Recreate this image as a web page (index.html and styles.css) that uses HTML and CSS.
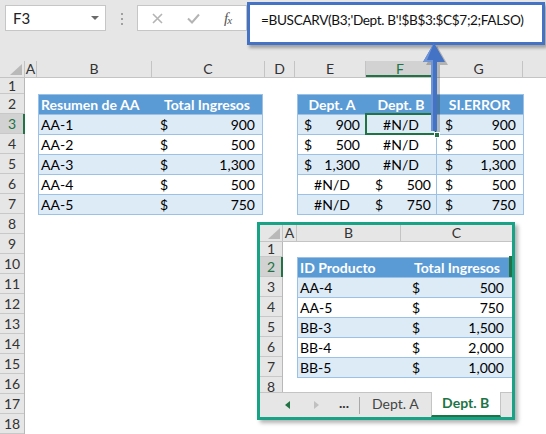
FILE: index.html
```html
<!DOCTYPE html>
<html>
<head>
<meta charset="utf-8">
<link rel="stylesheet" href="styles.css">
</head>
<body>
<div class="app">
  <div class="toolbar">
    <div class="namebox"><span>F3</span><span class="dd"></span></div>
    <div class="grip"><i></i><i></i><i></i></div>
    <div class="fxbox">
      <svg class="ico-x" width="11" height="11" viewBox="0 0 11 11"><path d="M1 1L10 10M10 1L1 10" stroke="#b4b4b4" stroke-width="1.6" fill="none"/></svg>
      <svg class="ico-ok" width="13" height="11" viewBox="0 0 13 11"><path d="M1 5.5L5 9.5L12 1.5" stroke="#b4b4b4" stroke-width="2" fill="none"/></svg>
      <span class="fx">f<sub>x</sub></span>
    </div>
    <div class="formula">=BUSCARV(B3;'Dept. B'!$B$3:$C$7;2;FALSO)</div>
  </div>

  <div class="colheads">
    <div class="corner"><span class="tri"></span></div>
    <div class="ch w-a">A</div>
    <div class="ch w-b">B</div>
    <div class="ch w-c">C</div>
    <div class="ch w-d">D</div>
    <div class="ch w-e">E</div>
    <div class="ch w-f sel">F</div>
    <div class="ch w-g">G</div>
    <div class="ch w-h"></div>
  </div>

  <div class="body">
    <div class="rowheads">
      <div class="rh r1">1</div>
      <div class="rh">2</div>
      <div class="rh sel">3</div>
      <div class="rh">4</div>
      <div class="rh">5</div>
      <div class="rh">6</div>
      <div class="rh">7</div>
      <div class="rh">8</div>
      <div class="rh">9</div>
      <div class="rh">10</div>
      <div class="rh">11</div>
      <div class="rh">12</div>
      <div class="rh">13</div>
      <div class="rh">14</div>
      <div class="rh">15</div>
      <div class="rh">16</div>
      <div class="rh">17</div>
      <div class="rh">18</div>
    </div>
    <div class="cells">
      <div class="tbl tl">
        <div class="tr hd"><div class="c pl">Resumen de AA</div><div class="c ctr">Total Ingresos</div></div>
        <div class="tr band"><div class="c pl">AA-1</div><div class="c acc accl"><span>$</span><span>900</span></div></div>
        <div class="tr"><div class="c pl">AA-2</div><div class="c acc accl"><span>$</span><span>500</span></div></div>
        <div class="tr band"><div class="c pl">AA-3</div><div class="c acc accl"><span>$</span><span>1,300</span></div></div>
        <div class="tr"><div class="c pl">AA-4</div><div class="c acc accl"><span>$</span><span>500</span></div></div>
        <div class="tr band"><div class="c pl">AA-5</div><div class="c acc accl"><span>$</span><span>750</span></div></div>
      </div>
      <div class="tbl trt">
        <div class="tr hd"><div class="c ctr">Dept. A</div><div class="c ctr">Dept. B</div><div class="c ctr">SI.ERROR</div></div>
        <div class="tr band"><div class="c acc acce"><span>$</span><span>900</span></div><div class="c ctr cur">#N/D<span class="handle"></span></div><div class="c acc accg sep"><span>$</span><span>900</span></div></div>
        <div class="tr"><div class="c acc acce"><span>$</span><span>500</span></div><div class="c ctr">#N/D</div><div class="c acc accg sep"><span>$</span><span>500</span></div></div>
        <div class="tr band"><div class="c acc acce"><span>$</span><span>1,300</span></div><div class="c ctr">#N/D</div><div class="c acc accg sep"><span>$</span><span>1,300</span></div></div>
        <div class="tr"><div class="c ctr">#N/D</div><div class="c acc accf"><span>$</span><span>500</span></div><div class="c acc accg sep"><span>$</span><span>500</span></div></div>
        <div class="tr band"><div class="c ctr">#N/D</div><div class="c acc accf"><span>$</span><span>750</span></div><div class="c acc accg sep"><span>$</span><span>750</span></div></div>
      </div>
    </div>
  </div>

  <div class="inset">
    <div class="icolheads">
      <div class="icorner"><span class="tri"></span></div>
      <div class="ch iw-a">A</div>
      <div class="ch iw-b">B</div>
      <div class="ch iw-c">C</div>
    </div>
    <div class="ibody">
      <div class="irowheads">
        <div class="rh ir1">1</div>
        <div class="rh sel">2</div>
        <div class="rh">3</div>
        <div class="rh">4</div>
        <div class="rh">5</div>
        <div class="rh">6</div>
        <div class="rh">7</div>
        <div class="rh ir8">8</div>
      </div>
      <div class="icells">
        <div class="tbl ti">
          <div class="tr hd"><div class="c pl">ID Producto</div><div class="c ctr edge">Total Ingresos</div></div>
          <div class="tr band"><div class="c pl">AA-4</div><div class="c acc acci"><span>$</span><span>500</span></div></div>
          <div class="tr"><div class="c pl">AA-5</div><div class="c acc acci"><span>$</span><span>750</span></div></div>
          <div class="tr band"><div class="c pl">BB-3</div><div class="c acc acci"><span>$</span><span>1,500</span></div></div>
          <div class="tr"><div class="c pl">BB-4</div><div class="c acc acci"><span>$</span><span>2,000</span></div></div>
          <div class="tr band"><div class="c pl">BB-5</div><div class="c acc acci"><span>$</span><span>1,000</span></div></div>
        </div>
      </div>
    </div>
    <div class="tabbar">
      <span class="nav-l"></span>
      <span class="nav-r"></span>
      <span class="more">...</span>
      <span class="tsep"></span>
      <span class="tab">Dept. A</span>
      <span class="tab active">Dept. B</span>
      <span class="tabrest"></span>
    </div>
  </div>

  <svg class="arrow" width="36" height="100" viewBox="0 0 36 100">
    <polygon points="19,8 30,27 22,27 22,96 16,96 16,27 8,27" fill="rgba(0,0,0,0.22)"/>
    <polygon points="16,5 27,24 19,24 19,93 13,93 13,24 5,24" fill="#4472c4"/>
    <polygon points="16,5 5,24 13,24 13,93 15,93 15,22 9,22" fill="#6f95d8"/>
  </svg>
</div>
</body>
</html>
```
FILE: styles.css
```css
* { box-sizing: border-box; margin: 0; padding: 0; }
body { margin: 0; background: #fff; font-family: Lato, "Open Sans", sans-serif; }
.app { position: relative; width: 546px; height: 434px; overflow: hidden; background: #fff; }

/* toolbar */
.toolbar { height: 61px; background: #e6e6e6; display: flex; align-items: flex-start; padding-left: 5px; }
.namebox { margin-top: 5px; width: 101px; height: 26px; background: #fff; border: 1px solid #c6c6c6; display: flex; align-items: center; justify-content: space-between; padding: 0 6px 0 7px; font-size: 15px; color: #222; }
.dd { width: 0; height: 0; border-left: 4px solid transparent; border-right: 4px solid transparent; border-top: 4px solid #6a6a6a; }
.grip { margin: 13px 0 0 15px; display: flex; flex-direction: column; gap: 3px; width: 2px; }
.grip i { width: 2px; height: 2px; background: #a0a0a0; display: block; }
.fxbox { margin: 5px 0 0 14px; width: 110px; height: 26px; background: #fff; border: 1px solid #c6c6c6; display: flex; align-items: center; padding-left: 14px; }
.ico-x { margin-right: 24px; }
.ico-ok { margin-right: 24px; }
.fx { font-family: "Liberation Serif", serif; font-style: italic; font-size: 15px; color: #555; letter-spacing: -1px; }
.fx sub { font-size: 11px; vertical-align: -1px; }
.formula { margin: 2px 0 0 0; width: 298px; height: 43px; background: #fff; border: 3px solid #4472c4; box-shadow: 2px 3px 3px rgba(0,0,0,0.3); padding: 7px 0 0 11px; font-size: 13.6px; letter-spacing: -0.35px; color: #111; white-space: nowrap; }

/* column headers */
.colheads { display: flex; height: 17px; background: #e6e6e6; border-bottom: 1px solid #c4c4c4; }
.corner { width: 25px; border-right: 1px solid #c4c4c4; display: flex; align-items: flex-end; justify-content: flex-end; padding: 0 2px 2px 0; }
.tri { width: 0; height: 0; border-left: 12px solid transparent; border-bottom: 11px solid #b9b9b9; }
.ch { border-right: 1px solid #c4c4c4; font-size: 14px; color: #333; text-align: center; line-height: 16px; }
.w-a { width: 12px; }
.w-b { width: 115px; }
.w-c { width: 113px; }
.w-d { width: 30px; }
.w-e { width: 71px; }
.w-f { width: 69px; }
.w-g { width: 88px; }
.w-h { flex: 1; border-right: none; }
.ch.sel { background: #d2d2d2; color: #217346; border-bottom: 2px solid #217346; }

/* body */
.body { display: flex; }
.rowheads { width: 25px; background: #e6e6e6; border-right: 1px solid #b8b8b8; display: flex; flex-direction: column; }
.rh { height: 20px; border-bottom: 1px solid #c8c8c8; font-size: 14px; color: #333; text-align: center; line-height: 19px; position: relative; }
.rh.r1 { height: 16px; line-height: 15px; }
.rh.sel { background: #d2d2d2; color: #217346; }
.rh.sel::after { content: ""; position: absolute; right: -1px; top: 0; bottom: -1px; width: 2px; background: #217346; }
.cells { display: flex; align-items: flex-start; padding-top: 16px; }

/* tables */
.tbl { border: 1px solid #9bc2e6; font-size: 14px; color: #000; }
.tr { display: grid; height: 20px; border-top: 1px solid #9bc2e6; background: #fff; }
.tr.hd { height: 19px; border-top: none; background: #5b9bd5; color: #fff; font-weight: bold; }
.tr.band { background: #ddebf7; }
.c { line-height: 19px; white-space: nowrap; position: relative; }
.pl { padding-left: 2px; }
.ctr { text-align: center; }
.acc { display: flex; justify-content: space-between; }
.tl { margin-left: 13px; width: 225px; }
.tl .tr { grid-template-columns: 113px 1fr; }
.accl { padding: 0 7px 0 8px; }
.trt { margin-left: 34px; width: 227px; }
.trt .tr { grid-template-columns: 68px 70px 1fr; }
.acce { padding: 0 6px 0 6px; }
.accf { padding: 0 5px 0 9px; }
.accg { padding: 0 7px 0 8px; }
.sep { border-left: 1px solid #9bc2e6; }
.cur::after { content: ""; position: absolute; left: -1px; right: -1px; top: -2px; bottom: -1px; border: 2px solid #217346; }
.handle { position: absolute; right: -4px; bottom: -4px; width: 6px; height: 6px; background: #217346; border: 1px solid #fff; z-index: 2; }

/* inset */
.inset { position: absolute; left: 257px; top: 222px; width: 258px; height: 198px; border: 3px solid #19a386; background: #fff; box-shadow: 3px 3px 4px rgba(0,0,0,0.3); display: flex; flex-direction: column; }
.icolheads { display: flex; height: 17px; background: #e6e6e6; border-bottom: 1px solid #c4c4c4; }
.icorner { width: 23px; border-right: 1px solid #c4c4c4; display: flex; align-items: flex-end; justify-content: flex-end; padding: 0 2px 2px 0; }
.iw-a { width: 14px; }
.iw-b { width: 104px; }
.iw-c { flex: 1; border-right: none; }
.ibody { display: flex; height: 150px; }
.irowheads { width: 23px; background: #e6e6e6; border-right: 1px solid #b8b8b8; display: flex; flex-direction: column; }
.rh.ir1 { height: 15px; line-height: 14px; }
.rh.ir8 { height: 15px; line-height: 19px; overflow: hidden; border-bottom: none; }
.icells { flex: 1; padding-top: 15px; }
.ti { margin-left: 14px; width: 215px; border-right: none; }
.ti .tr { grid-template-columns: 104px 1fr; }
.acci { padding: 0 8px 0 10px; }
.edge::after { content: ""; position: absolute; right: 0; top: -2px; bottom: 0; width: 3px; background: #217346; }

/* tabs */
.tabbar { flex: 1; display: flex; align-items: stretch; background: #e6e6e6; border-top: 1px solid #c4c4c4; padding-left: 25px; font-size: 14px; }
.nav-l, .nav-r { align-self: center; width: 0; height: 0; border-top: 4px solid transparent; border-bottom: 4px solid transparent; }
.nav-l { border-right: 5px solid #217346; }
.nav-r { margin-left: 24px; border-left: 5px solid #c0c0c0; }
.more { margin-left: 20px; font-weight: bold; color: #333; line-height: 20px; width: 12px; }
.tsep { align-self: center; margin-left: 8px; width: 1px; height: 17px; background: #a8a8a8; }
.tab { padding: 0 12px 0 12px; line-height: 22px; color: #444; }
.tab.active { width: 70px; padding: 0; text-align: center; background: #fff; color: #217346; font-weight: bold; border-left: 1px solid #c4c4c4; border-right: 1px solid #c4c4c4; border-bottom: 2px solid #217346; margin-top: -1px; }
.tabrest { flex: 1; }

/* arrow */
.arrow { position: absolute; left: 418px; top: 38px; }
```
